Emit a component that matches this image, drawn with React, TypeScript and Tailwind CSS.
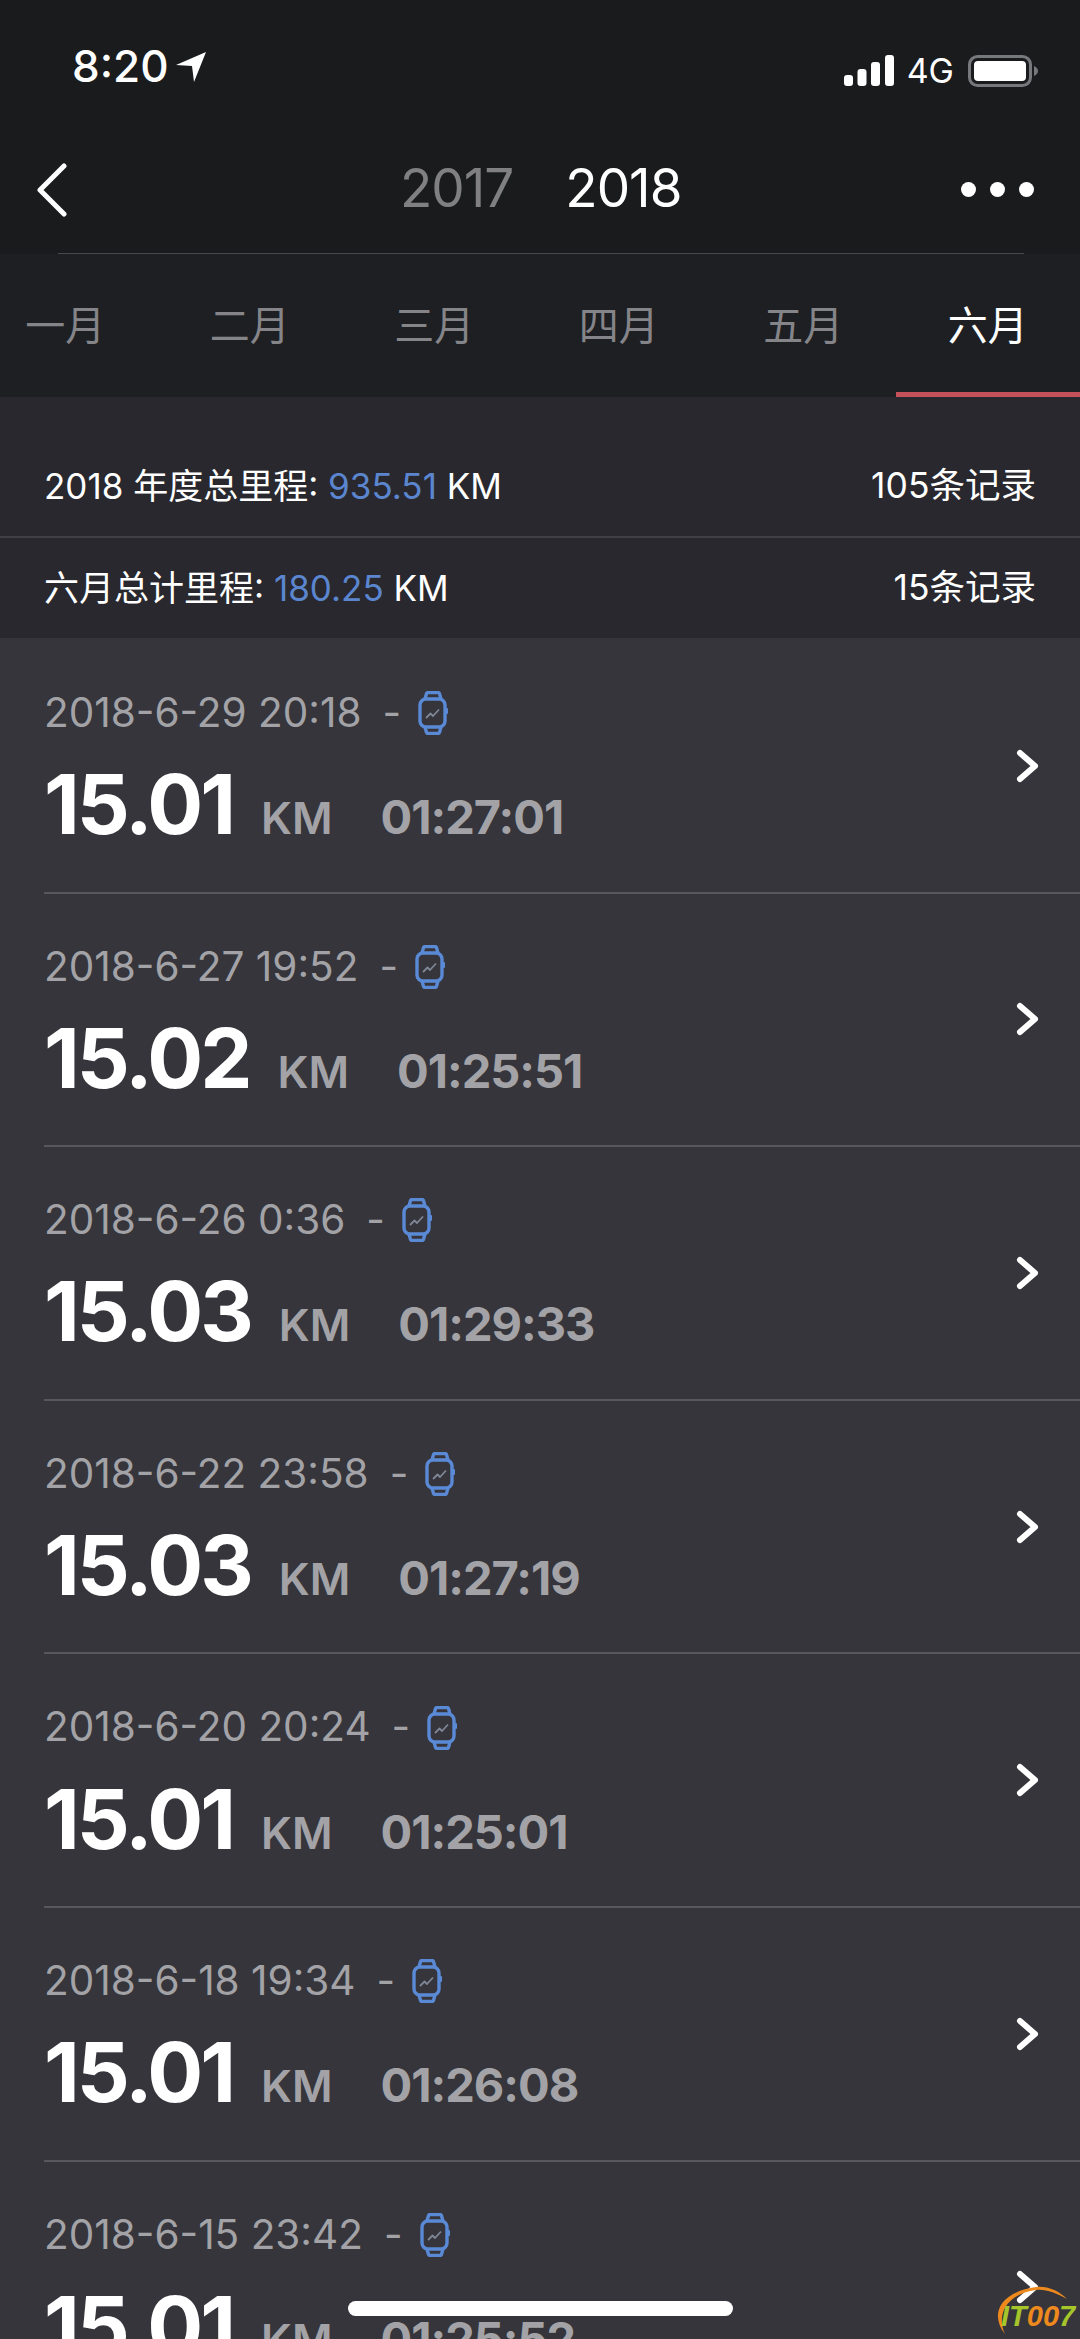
const font = "[font-family:Inter,'Noto_Sans_CJK_SC',sans-serif]";

const months = ["一月", "二月", "三月", "四月", "五月", "六月"];

const records = [
  { date: "2018-6-29 20:18", km: "15.01", time: "01:27:01" },
  { date: "2018-6-27 19:52", km: "15.02", time: "01:25:51" },
  { date: "2018-6-26 0:36", km: "15.03", time: "01:29:33" },
  { date: "2018-6-22 23:58", km: "15.03", time: "01:27:19" },
  { date: "2018-6-20 20:24", km: "15.01", time: "01:25:01" },
  { date: "2018-6-18 19:34", km: "15.01", time: "01:26:08" },
  { date: "2018-6-15 23:42", km: "15.01", time: "01:25:52" },
];

function WatchIcon() {
  return (
    <svg viewBox="0 0 30 44" className="h-[44px] w-[30px] shrink-0" fill="none">
      <path d="M7 8 L8.5 2.5 Q9 1.5 10 1.5 H20 Q21 1.5 21.5 2.5 L23 8" stroke="#5a8ad6" strokeWidth="3.4" />
      <path d="M7 36 L8.5 41.5 Q9 42.5 10 42.5 H20 Q21 42.5 21.5 41.5 L23 36" stroke="#5a8ad6" strokeWidth="3.4" />
      <rect x="2" y="8" width="25" height="28" rx="6" stroke="#5a8ad6" strokeWidth="3.4" />
      <rect x="27.5" y="17" width="2.5" height="6" rx="1" fill="#5a8ad6" />
      <path d="M8 27 L12.5 22.5 L15 25 L21 18.5" stroke="#7f8696" strokeWidth="1.8" strokeLinejoin="round" />
    </svg>
  );
}

function Chevron() {
  return (
    <svg viewBox="0 0 24 34" className="h-[34px] w-[24px]" fill="none">
      <path d="M4 4 L19 17 L4 30" stroke="#fff" strokeWidth="6" strokeLinecap="round" strokeLinejoin="round" />
    </svg>
  );
}

function StatusBar() {
  return (
    <div className="flex h-[132px] items-end justify-between pb-[44px] pl-[72px] pr-[42px]">
      <div className="flex items-center gap-[6px]">
        <span className="text-[44px] leading-none font-medium text-white">8:20</span>
        <svg viewBox="0 0 32 32" className="mt-[2px] h-[32px] w-[32px]">
          <path d="M1 14 L31 1 L19 31 L17 15 Z" fill="#fff" />
        </svg>
      </div>
      <div className="flex items-center">
        <svg viewBox="0 0 50 32" className="h-[32px] w-[50px]">
          <rect x="0" y="20" width="9" height="11" rx="3" fill="#fff" />
          <rect x="13.5" y="14" width="9" height="17" rx="3" fill="#fff" />
          <rect x="27" y="7" width="9" height="24" rx="3" fill="#fff" />
          <rect x="41" y="0" width="9" height="31" rx="3" fill="#fff" />
        </svg>
        <span className="ml-[13px] text-[34px] leading-none text-white">4G</span>
        <svg viewBox="0 0 70 32" className="ml-[14px] h-[32px] w-[70px]">
          <rect x="1.5" y="1.5" width="61" height="29" rx="8" fill="none" stroke="#77787b" strokeWidth="3" />
          <rect x="6" y="6" width="52" height="20" rx="4" fill="#fff" />
          <path d="M66 11 Q70 13 70 16 Q70 19 66 21 Z" fill="#77787b" />
        </svg>
      </div>
    </div>
  );
}

function NavBar() {
  return (
    <div className="relative flex h-[121px] items-center justify-between pl-[36px] pr-[46px] pb-[6px]">
      <svg viewBox="0 0 32 54" className="h-[54px] w-[32px]" fill="none">
        <path d="M28 3 L4 27 L28 51" stroke="#fff" strokeWidth="5" strokeLinecap="round" strokeLinejoin="round" />
      </svg>
      <div className="absolute left-[400px] top-[30px] flex gap-[52px] text-[53px] leading-none tracking-[-1px]">
        <span className="text-[#808082]">2017</span>
        <span className="text-white">2018</span>
      </div>
      <div className="flex gap-[14px]">
        <span className="h-[15px] w-[15px] rounded-full bg-white" />
        <span className="h-[15px] w-[15px] rounded-full bg-white" />
        <span className="h-[15px] w-[15px] rounded-full bg-white" />
      </div>
    </div>
  );
}

function SummaryRow({
  label,
  value,
  count,
}: {
  label: string;
  value: string;
  count: string;
}) {
  return (
    <div className="flex h-[100px] items-center justify-between pl-[44px] pr-[44px] leading-none text-white">
      <div className="text-[35px]">
        {label}: <span className="text-[#5b86cf]">{value}</span> KM
      </div>
      <div className="text-[35.5px]">{count}</div>
    </div>
  );
}

function RecordRow({ date, km, time }: { date: string; km: string; time: string }) {
  return (
    <div className="ml-[44px] flex h-[253.6px] shrink-0 items-center justify-between border-b-[2px] border-[#57575c] pr-[40px]">
      <div className="flex flex-col pt-[9px]">
        <div className="flex h-[44px] items-center text-[40.5px] leading-none text-[#a3a3a7]">
          <span>{date}</span>
          <span className="ml-[21px] mr-[17px]">-</span>
          <WatchIcon />
        </div>
        <div className="mt-[24px] flex items-baseline">
          <span className="text-[83px] leading-[90px] font-bold tracking-[-3px] text-white">{km}</span>
          <span className="ml-[28px] text-[44px] leading-none font-semibold text-[#a3a3a7]">KM</span>
          <span className="ml-[48px] text-[47px] leading-none font-bold tracking-[-1px] text-[#a3a3a7]">{time}</span>
        </div>
      </div>
      <Chevron />
    </div>
  );
}

export default function App() {
  return (
    <div className={`relative h-[2339px] w-[1080px] overflow-hidden bg-[#35353b] ${font}`}>
      <header className="relative h-[254px] bg-[#1a1b1d]">
        <StatusBar />
        <NavBar />
        <div className="absolute bottom-0 left-[58px] right-[56px] h-[1px] bg-[#48484b]" />
      </header>

      <nav className="flex h-[143px] bg-[#1e1f23]">
        <div className="-ml-[27px] flex w-[1107px] shrink-0">
          {months.map((m, i) => (
            <div
              key={m}
              className={`flex h-full flex-1 items-center justify-center border-b-[5px] pt-[6px] text-[40px] leading-none ${
                i === 5 ? "border-[#c6505a] text-white" : "border-transparent text-[#858589]"
              }`}
            >
              {m}
            </div>
          ))}
        </div>
      </nav>

      <section className="flex h-[241px] flex-col bg-[#28282e] pt-[39px]">
        <SummaryRow label="2018 年度总里程" value="935.51" count="105条记录" />
        <div className="h-[2px] shrink-0 bg-[#3f3f45]" />
        <SummaryRow label="六月总计里程" value="180.25" count="15条记录" />
      </section>

      <main className="flex flex-col pt-[2px]">
        {records.map((r) => (
          <RecordRow key={r.date} {...r} />
        ))}
      </main>

      {/* home indicator and site badge sit over the list */}
      <div className="absolute left-[348px] top-[2301px] h-[15px] w-[385px] rounded-full bg-white" />
      <div className="absolute left-[994px] top-[2285px] h-[54px] w-[86px]">
        <svg viewBox="0 0 86 54" className="absolute inset-0 h-full w-full" fill="none">
          <path d="M11 49 C-3 32 2 8 42 2 C54 1 65 6 73 14 C62 8 52 4 42 5 C12 9 2 30 11 49 Z" fill="#ee8a1d" />
        </svg>
        <span className="absolute left-[7px] top-[17px] text-[29px] leading-none font-bold italic text-[#a5c52a] [font-family:'Liberation_Sans',sans-serif]">
          IT<span className="text-[#ee8a1d]">00</span>7
        </span>
      </div>
    </div>
  );
}
